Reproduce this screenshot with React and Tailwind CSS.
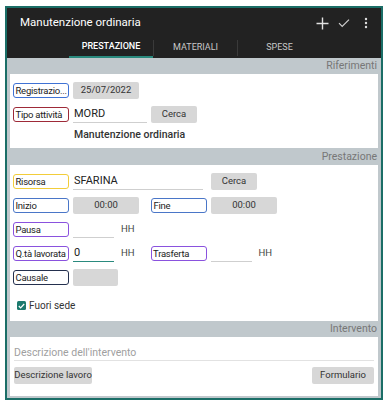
import React from "react";

const FONT = { fontFamily: "Roboto, 'Liberation Sans', sans-serif" };

function Label({ text, color, className = "" }) {
  return (
    <div
      className={`w-[56px] h-[15px] shrink-0 border-[1.5px] rounded-[3px] flex items-center pl-[1.5px] text-[9.5px] tracking-[-0.25px] text-[#222] leading-none whitespace-nowrap overflow-hidden ${color} ${className}`}
    >
      {text}
    </div>
  );
}

function GrayButton({ children, className = "" }) {
  return (
    <div
      className={`h-[17px] bg-[#d7d7d7] rounded-[2px] flex items-center justify-center text-[9.5px] text-[#333] whitespace-nowrap shrink-0 ${className}`}
    >
      {children}
    </div>
  );
}

function Underline({ value, className = "", line = "border-[#cfcfcf]" }) {
  return (
    <div
      className={`h-[17px] border-b ${line} flex items-center text-[11px] text-[#222] pl-[1px] shrink-0 ${className}`}
    >
      {value}
    </div>
  );
}

function SectionBar({ title, className = "" }) {
  return (
    <div className={`flex justify-end items-center pr-[1px] text-[10.5px] text-[#777] ${className}`}>
      {title}
    </div>
  );
}

export default function App() {
  return (
    <div className="w-[387px] h-[405px] bg-white pt-[6px] pl-[5px]" style={FONT}>
      <div className="w-[378px] h-[394px] border-2 border-[#1b6e67] flex flex-col bg-[#c0c8cc]">
        {/* Header */}
        <div className="h-[50px] bg-[#222] shrink-0 flex flex-col">
          <div className="h-[30px] flex items-center justify-between pl-[13px] pr-[12px]">
            <span className="text-white text-[11.5px]">Manutenzione ordinaria</span>
            <div className="flex items-center gap-[9px]">
              <svg width="13" height="13" viewBox="0 0 13 13">
                <path d="M6.5 0.5v12M0.5 6.5h12" stroke="#e0e0e0" strokeWidth="1.4" />
              </svg>
              <svg width="12" height="10" viewBox="0 0 12 10">
                <path d="M1 5.2l3.2 3.2L11 1.6" stroke="#cfcfcf" strokeWidth="1.2" fill="none" />
              </svg>
              <svg width="6" height="12" viewBox="0 0 6 12" className="ml-[4px]">
                <circle cx="3" cy="2" r="1.2" fill="#e0e0e0" />
                <circle cx="3" cy="6" r="1.2" fill="#e0e0e0" />
                <circle cx="3" cy="10" r="1.2" fill="#e0e0e0" />
              </svg>
            </div>
          </div>
          <div className="h-[20px] flex pl-[62px]">
            <div className="w-[84px] flex items-center justify-center text-[9px] font-medium text-white border-b-2 border-[#2a8a7e]">
              PRESTAZIONE
            </div>
            <div className="w-[84px] flex items-center justify-center text-[9px] text-[#c8c8c8] border-l border-[#3a3a3a] my-[2px]">
              MATERIALI
            </div>
            <div className="w-[84px] flex items-center justify-center text-[9px] text-[#c8c8c8] border-l border-[#3a3a3a] my-[2px]">
              SPESE
            </div>
          </div>
        </div>

        <div className="flex-1 flex flex-col pl-[3px] pr-[3px]">
          {/* Riferimenti */}
          <SectionBar title="Riferimenti" className="h-[16px]" />
          <div className="bg-white h-[74px] pt-[8px] pl-[3px] flex flex-col gap-[7px]">
            <div className="flex items-center h-[17px]">
              <Label text="Registrazio..." color="border-[#3f72d4]" />
              <GrayButton className="w-[66px] ml-[4px]">25/07/2022</GrayButton>
            </div>
            <div className="flex items-center h-[17px]">
              <Label text="Tipo attività" color="border-[#9e2a38]" />
              <Underline value="MORD" className="w-[74px] ml-[4px]" />
              <GrayButton className="w-[46px] ml-[4px]">Cerca</GrayButton>
            </div>
            <div className="pl-[61px] text-[10.5px] font-medium text-[#333] leading-none">
              Manutenzione ordinaria
            </div>
          </div>

          {/* Prestazione */}
          <SectionBar title="Prestazione" className="h-[17px]" />
          <div className="bg-white h-[156px] pt-[8px] pl-[3px] flex flex-col gap-[7px]">
            <div className="flex items-center h-[17px]">
              <Label text="Risorsa" color="border-[#f2cd3a]" />
              <Underline value="SFARINA" className="w-[130px] ml-[4px]" />
              <GrayButton className="w-[46px] ml-[8px]">Cerca</GrayButton>
            </div>
            <div className="flex items-center h-[17px]">
              <Label text="Inizio" color="border-[#4a76c8]" />
              <GrayButton className="w-[66px] ml-[4px]">00:00</GrayButton>
              <Label text="Fine" color="border-[#4a76c8]" className="ml-[12px]" />
              <GrayButton className="w-[66px] ml-[4px]">00:00</GrayButton>
            </div>
            <div className="flex items-center h-[17px]">
              <Label text="Pausa" color="border-[#8a52de]" />
              <Underline value="" className="w-[41px] ml-[4px]" />
              <span className="ml-[7px] text-[9.5px] text-[#444]">HH</span>
            </div>
            <div className="flex items-center h-[17px]">
              <Label text="Q.tà lavorata" color="border-[#8a52de]" />
              <Underline value="0" className="w-[41px] ml-[4px]" line="border-[#2a8a7e]" />
              <span className="ml-[7px] text-[9.5px] text-[#444]">HH</span>
              <Label text="Trasferta" color="border-[#8a52de]" className="ml-[16px]" />
              <Underline value="" className="w-[41px] ml-[4px]" />
              <span className="ml-[7px] text-[9.5px] text-[#444]">HH</span>
            </div>
            <div className="flex items-center h-[17px]">
              <Label text="Causale" color="border-[#24304e]" />
              <div className="w-[45px] h-[17px] ml-[4px] bg-[#d7d7d7] rounded-[2px]" />
            </div>
            <div className="flex items-center mt-[5px] pl-[4px]">
              <div className="w-[9px] h-[9px] rounded-[1.5px] bg-[#1c7a6e] flex items-center justify-center">
                <svg width="7" height="6" viewBox="0 0 7 6">
                  <path d="M0.8 3l1.8 1.8L6.2 1" stroke="white" strokeWidth="1.2" fill="none" />
                </svg>
              </div>
              <span className="ml-[3px] text-[10px] text-[#333]">Fuori sede</span>
            </div>
          </div>

          {/* Intervento */}
          <SectionBar title="Intervento" className="h-[16px]" />
          <div className="bg-white h-[59px] px-[4px] flex flex-col">
            <div className="mt-[9px] h-[15px] border-b border-[#e2e2e2] text-[10.5px] text-[#a0a0a0] flex items-center">
              Descrizione dell'intervento
            </div>
            <div className="flex justify-between mt-[6px]">
              <GrayButton className="w-[78px]">Descrizione lavoro</GrayButton>
              <GrayButton className="w-[62px]">Formulario</GrayButton>
            </div>
          </div>
        </div>
      </div>
    </div>
  );
}
